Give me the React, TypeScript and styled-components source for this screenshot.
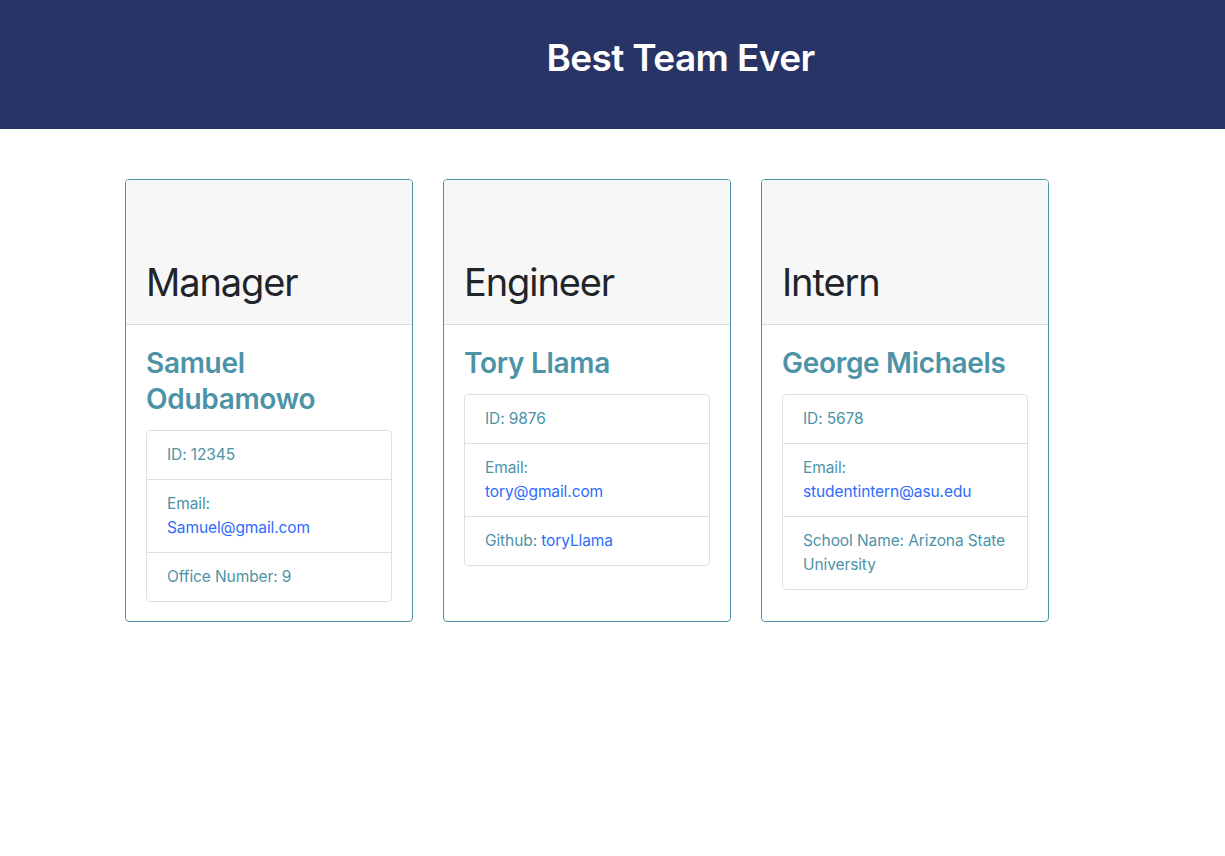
import styled, { createGlobalStyle } from 'styled-components';

const GlobalStyle = createGlobalStyle`
  body {
    margin: 0;
    background: #ffffff;
    font-family: Inter, "Liberation Sans", sans-serif;
    color: #212529;
  }
  * { box-sizing: border-box; }
`;

const TEAL = '#4d93a8';
const LINK = '#2f6bfd';

interface Employee {
    role: string;
    name: string;
    id: string;
    email: string;
    extraLabel: string;
    extraValue: string;
    extraIsLink?: boolean;
}

const team: Employee[] = [
    { role: 'Manager', name: 'Samuel Odubamowo', id: '12345', email: 'Samuel@gmail.com', extraLabel: 'Office Number', extraValue: '9' },
    { role: 'Engineer', name: 'Tory Llama', id: '9876', email: 'tory@gmail.com', extraLabel: 'Github', extraValue: 'toryLlama', extraIsLink: true },
    { role: 'Intern', name: 'George Michaels', id: '5678', email: 'studentintern@asu.edu', extraLabel: 'School Name', extraValue: 'Arizona State University' },
];

const Banner = styled.header`
  background: #293466;
  height: 129px;
  padding-left: 136px;
  display: flex;
  align-items: center;
  justify-content: center;
`;

const Title = styled.h1`
  margin: 0 0 12px;
  color: #ffffff;
  font-size: 37px;
  font-weight: 600;
  letter-spacing: -0.6px;
  line-height: 1.2;
`;

const CardRow = styled.main`
  display: flex;
  align-items: stretch;
  gap: 30px;
  padding: 50px 0 0 125px;
`;

const Card = styled.section`
  width: 288px;
  border: 1px solid ${TEAL};
  border-radius: 4px;
  display: flex;
  flex-direction: column;
  overflow: hidden;
`;

const CardHeader = styled.div`
  background: #f7f7f7;
  border-bottom: 1px solid #dcdcdc;
  padding: 78px 20px 18px;
`;

const Role = styled.h2`
  margin: 0;
  font-size: 38px;
  font-weight: 400;
  letter-spacing: -1.1px;
  line-height: 48px;
  color: #212529;
`;

const CardBody = styled.div`
  padding: 20px 20px 19px;
  flex: 1;
`;

const Name = styled.h3`
  margin: 0 0 13px;
  font-size: 28px;
  font-weight: 600;
  letter-spacing: -0.3px;
  line-height: 36px;
  color: ${TEAL};
`;

const InfoList = styled.ul`
  list-style: none;
  margin: 0;
  padding: 0;
  border: 1px solid #dfdfdf;
  border-radius: 4px;
`;

const InfoItem = styled.li`
  padding: 12px 20px;
  font-size: 15.5px;
  letter-spacing: -0.1px;
  line-height: 24px;
  color: ${TEAL};
  & + & {
    border-top: 1px solid #dfdfdf;
  }
`;

const Link = styled.a`
  color: ${LINK};
  text-decoration: none;
`;

export default function App() {
    return (
        <>
            <GlobalStyle />
            <Banner>
                <Title>Best Team Ever</Title>
            </Banner>
            <CardRow>
                {team.map((m) => (
                    <Card key={m.id}>
                        <CardHeader>
                            <Role>{m.role}</Role>
                        </CardHeader>
                        <CardBody>
                            <Name>{m.name}</Name>
                            <InfoList>
                                <InfoItem>ID: {m.id}</InfoItem>
                                <InfoItem>
                                    Email:
                                    <br />
                                    <Link href={`mailto:${m.email}`}>{m.email}</Link>
                                </InfoItem>
                                <InfoItem>
                                    {m.extraLabel}:{' '}
                                    {m.extraIsLink ? <Link href="#">{m.extraValue}</Link> : m.extraValue}
                                </InfoItem>
                            </InfoList>
                        </CardBody>
                    </Card>
                ))}
            </CardRow>
        </>
    );
}
